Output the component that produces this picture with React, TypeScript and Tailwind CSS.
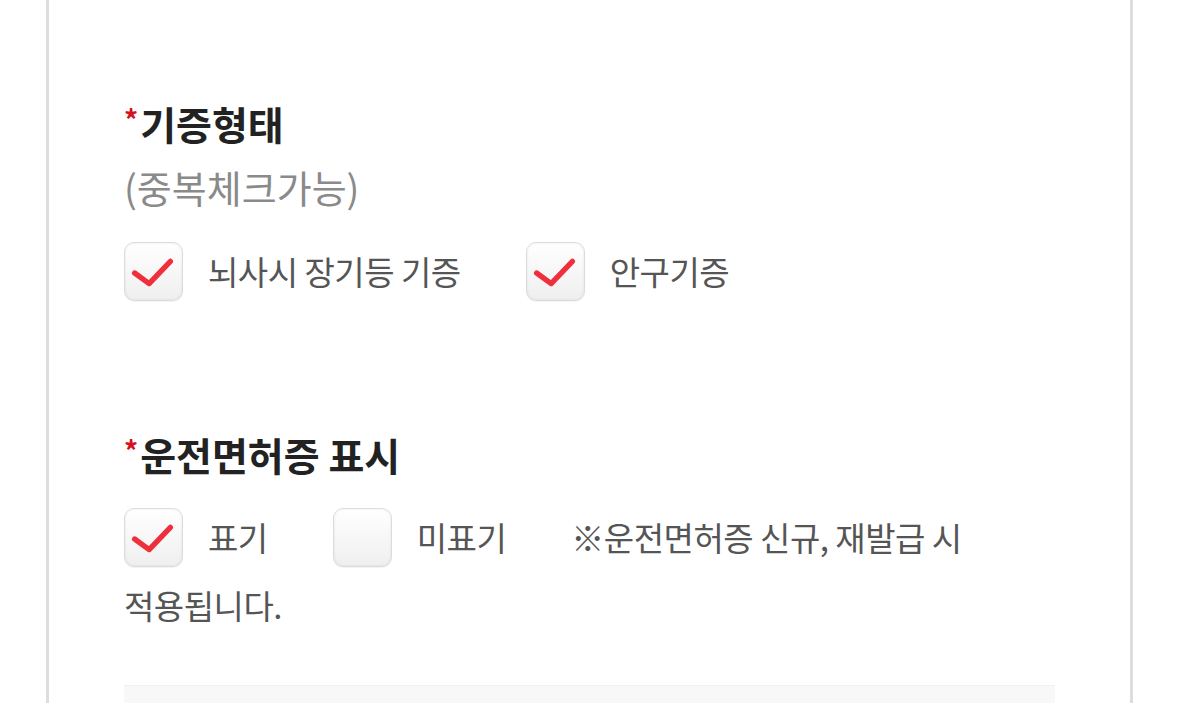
import React from 'react';

const font = { fontFamily: '"Noto Sans CJK KR", "Noto Sans", sans-serif' };

const CheckBox: React.FC<{ checked: boolean }> = ({ checked }) => (
  <span className="inline-flex shrink-0 w-[59px] h-[59px] rounded-[10px] border border-[#dcdcdc] bg-gradient-to-b from-white to-[#efefef] shadow-[inset_0_0_3px_rgba(0,0,0,0.08),0_1px_1px_rgba(0,0,0,0.05)]">
    {checked && (
      <svg width="59" height="59" viewBox="0 0 59 59">
        <polyline
          points="10,30 25,41 47,18"
          fill="none"
          stroke="#ef2f3b"
          strokeWidth="5.5"
          strokeLinecap="round"
          strokeLinejoin="round"
        />
      </svg>
    )}
  </span>
);

const Option: React.FC<{ checked: boolean; label: string; last?: boolean }> = ({ checked, label, last }) => (
  <span className={`inline-flex items-center align-middle leading-none ${last ? '' : 'mr-[65px]'}`}>
    <CheckBox checked={checked} />
    <span className="ml-[25px] text-[33px] leading-none text-[#555] tracking-[-0.5px]">{label}</span>
  </span>
);

const Title: React.FC<{ text: string }> = ({ text }) => (
  <h2 className="text-[39px] leading-[48px] font-bold text-[#222]">
    <span className="text-[#d4111d] text-[28px] relative -top-[9px] mr-[2px]">*</span>
    {text}
  </h2>
);

export default function App() {
  return (
    <div className="w-[1179px] h-[703px] overflow-hidden bg-white" style={font}>
      <div className="ml-[46px] w-[1087px] min-h-[703px] border-x-[3px] border-[#dddddd] px-[75px] pt-[99px]">
        <Title text="기증형태" />
        <p className="mt-[11px] text-[38px] leading-[48px] text-[#8a8a8a]">(중복체크가능)</p>

        <div className="mt-[25px] h-[70px] flex items-center">
          <Option checked label="뇌사시 장기등 기증" />
          <Option checked label="안구기증" last />
        </div>

        <div className="mt-[124px]">
          <Title text="운전면허증 표시" />
        </div>

        <div className="mt-[18px] leading-[63px] text-[33px] text-[#555] tracking-[-0.5px] break-keep">
          <Option checked label="표기" />
          <Option checked={false} label="미표기" />
          <span className="align-middle">※운전면허증 신규, 재발급 시 적용됩니다.</span>
        </div>

        <div className="mt-[49px] h-[40px] bg-[#f8f8f8] border-t border-[#f0f0f0]" />
      </div>
    </div>
  );
}
